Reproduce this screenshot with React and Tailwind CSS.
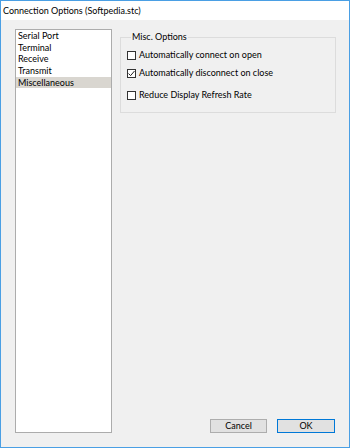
import React from 'react';

const items = ['Serial Port', 'Terminal', 'Receive', 'Transmit', 'Miscellaneous'];

const CheckBox = ({ checked, label, className = '' }) => (
    <div className={`flex items-center gap-[3px] ${className}`}>
        <span className="w-[9px] h-[9px] border border-[#333333] bg-white flex items-center justify-center shrink-0">
            {checked && (
                <svg width="7" height="7" viewBox="0 0 7 7">
                    <path d="M0.5 3.5 L2.6 5.6 L6.5 1" fill="none" stroke="#222222" strokeWidth="1" />
                </svg>
            )}
        </span>
        <span className="leading-[12px]">{label}</span>
    </div>
);

const App = () => {
    return (
        <div
            className="w-[350px] h-[448px] border border-[#4a9fe4] flex flex-col text-[9px] text-black bg-[#f0f0f0]"
            style={{ fontFamily: 'Lato, "Noto Sans", "Liberation Sans", sans-serif' }}
        >
            <div className="h-[19px] bg-white flex items-center pl-[2px]">
                Connection Options (Softpedia.stc)
            </div>

            <div className="flex-1 flex pl-[14px] pr-[13px] pt-[9px] pb-[14px]">
                <div className="w-[97px] bg-white border border-[#acacac]">
                    {items.map((item, i) => (
                        <div
                            key={item}
                            className={`h-[11.7px] leading-[11.7px] pl-[2px] ${i === 4 ? 'bg-[#d9d6d0]' : ''}`}
                        >
                            {item}
                        </div>
                    ))}
                </div>

                <div className="flex-1 ml-[8px] flex flex-col justify-between">
                    <fieldset className="border border-[#dcdcdc] h-[82px] mt-[2px] pl-[6px]">
                        <legend className="ml-[4px] px-[1px] leading-[12px]">Misc. Options</legend>
                        <CheckBox label="Automatically connect on open" className="mt-[6px]" />
                        <CheckBox checked label="Automatically disconnect on close" className="mt-[6px]" />
                        <CheckBox label="Reduce Display Refresh Rate" className="mt-[10px]" />
                    </fieldset>

                    <div className="flex justify-end gap-[10px] pr-[1px]">
                        <button className="w-[57px] h-[14px] bg-[#e1e1e1] border border-[#adadad] leading-[12px] text-[9px]">
                            Cancel
                        </button>
                        <button className="w-[58px] h-[14px] bg-[#e1e1e1] border border-[#0078d7] leading-[12px] text-[9px]">
                            OK
                        </button>
                    </div>
                </div>
            </div>
        </div>
    );
};

export default App;
